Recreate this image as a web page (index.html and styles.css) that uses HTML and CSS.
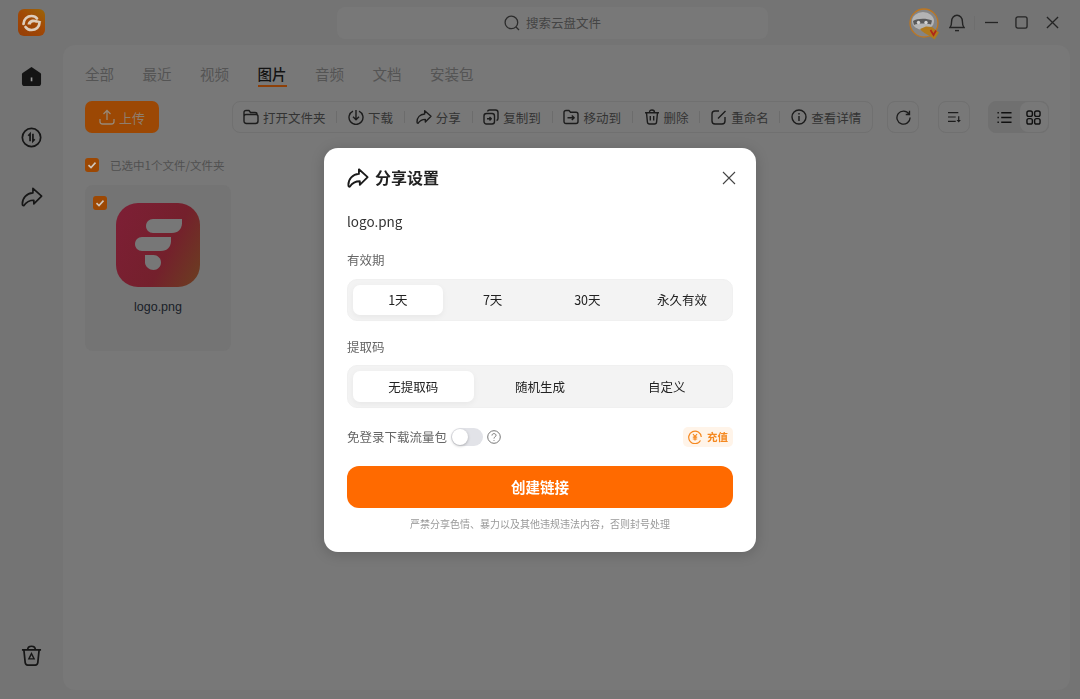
FILE: index.html
```html
<!DOCTYPE html>
<html lang="zh-CN">
<head>
    <meta charset="UTF-8">
    <meta name="viewport" content="width=device-width, initial-scale=1.0">
    <title>分享设置</title>
    <link rel="stylesheet" href="styles.css">
</head>
<body>
    <svg class="icon-defs" width="0" height="0">
        <symbol id="i-share" viewBox="0 0 24 24"><path d="M13 2.500 22.500 11 14 19.500V15.500C10 15.500 6 17 3 21.500 2 21.500 1.500 21 1.500 19.500 1.500 13 6 8 13 7.500Z"/></symbol>
    </svg>

    <div class="app">
        <header class="titlebar">
            <svg class="app-logo" viewBox="0 0 27 27">
                <defs>
                    <linearGradient id="appGrad" x1="1" y1="0" x2="0.3" y2="1">
                        <stop offset="0" stop-color="#9a6608"/>
                        <stop offset="0.5" stop-color="#a24a06"/>
                        <stop offset="1" stop-color="#984006"/>
                    </linearGradient>
                </defs>
                <rect width="27" height="27" rx="6" fill="url(#appGrad)"/>
                <path d="M5.500 15C5.500 10 9.500 7 13.500 7 16 7 18 8 19 9.500M21.500 13.500C21.500 18 18 21 13.500 21 10.500 21 8.500 19.500 7.500 18" fill="none" stroke="#ddcdbc" stroke-width="2.700" stroke-linecap="round"/>
                <path d="M9.500 15.500C10 12 12.500 10.500 15.500 10.500 18 10.500 20.500 11.500 23.500 12.500 21 14 19 14 17 13.500 15 13 13 14 13 15.500Z" fill="#ddcdbc"/>
            </svg>
            <div class="search">
                <svg class="search-icon" viewBox="0 0 16 16"><circle cx="7.400" cy="7.400" r="6.300"/><path d="m12 12 3 3"/></svg>
                <span>搜索云盘文件</span>
            </div>
            <div class="window-tools">
                <svg class="avatar" viewBox="0 0 32 32">
                    <circle cx="15" cy="15" r="14" fill="#858585" stroke="#bd7620" stroke-width="1.300"/>
                    <ellipse cx="14" cy="13" rx="11" ry="9" fill="#b4b4b4"/>
                    <path d="M4 13C8 10.500 17 10 23 12.500L22 16.500C17 15 9 15 5 17Z" fill="#5a5a5a"/>
                    <circle cx="9.500" cy="14.500" r="1.700" fill="#d2d2d2"/>
                    <circle cx="17" cy="14.500" r="1.700" fill="#d2d2d2"/>
                    <path d="M11 21 17 18.500 23 19 30 24.500 25.500 31.500 20 27.500C17 26 13 24 11 21Z" fill="#b07a1e"/>
                    <path d="m21.500 22 3 5 2.500-4.500" fill="none" stroke="#b0261a" stroke-width="1.700"/>
                </svg>
                <svg class="tool-icon bell" viewBox="0 0 16 18"><path d="M1 13.500C2.400 12 2.600 11 2.600 7.500 2.600 3.800 5 1.200 8 1.200S13.400 3.800 13.400 7.500C13.400 11 13.600 12 15 13.500Z"/><path d="M6 16.600H10"/></svg>
                <span class="tool-sep"></span>
                <svg class="tool-icon win-min" viewBox="0 0 14 14"><path d="M0 7H14"/></svg>
                <svg class="tool-icon win-max" viewBox="0 0 14 14"><rect x="1" y="1" width="12" height="12" rx="2"/></svg>
                <svg class="tool-icon win-close" viewBox="0 0 14 14"><path d="m1 1 12 12M13 1 1 13"/></svg>
            </div>
        </header>

        <div class="workspace">
            <nav class="sidebar">
                <svg class="side-icon home" viewBox="0 0 22 22"><path d="M11 1 20.300 7.400C20.800 7.800 21 8.200 21 8.800V18C21 20 20 21 18 21H4C2 21 1 20 1 18V8.800C1 8.200 1.200 7.800 1.700 7.400Z" fill="#141414"/><rect x="10.200" y="12" width="1.700" height="4" fill="#999"/></svg>
                <svg class="side-icon swap" viewBox="0 0 22 22"><circle cx="11" cy="11" r="9.600"/><path d="M9.500 14.800V7.200L7.600 9.200M12.500 7.200V14.800L14.400 12.800"/></svg>
                <svg class="side-icon sharing" viewBox="0 0 24 24"><use href="#i-share"/></svg>
                <svg class="side-icon trash" viewBox="0 0 22 22"><path d="M1 5H21M3 5 4.400 18.500C4.600 20 5.400 21 7 21H15C16.600 21 17.400 20 17.600 18.500L19 5M7 5C7 2.500 8.500 1.300 11 1.300S15 2.500 15 5"/><path d="M11 9 13.800 14.500H8.200Z" stroke-width="1.400"/></svg>
            </nav>

            <main class="panel">
                <div class="tabs">
                    <span class="tab">全部</span>
                    <span class="tab">最近</span>
                    <span class="tab">视频</span>
                    <span class="tab tab-active">图片</span>
                    <span class="tab">音频</span>
                    <span class="tab">文档</span>
                    <span class="tab">安装包</span>
                </div>

                <div class="actions">
                    <button class="upload">
                        <svg viewBox="0 0 16 16"><path d="M8 11V1.500M4.500 5 8 1.500 11.500 5M1 10V12.500C1 14 2 15 3.500 15H12.500C14 15 15 14 15 12.500V10"/></svg>
                        上传
                    </button>
                    <div class="toolbar">
                        <span class="tb-item"><svg viewBox="0 0 16 16"><path d="M1 12V3.500C1 2.300 1.800 1.500 3 1.500H6L7.500 3.500H12C13.200 3.500 14 4.200 14 5.200M3 5.500H13C14.400 5.500 15 6.300 15 7.500V12C15 13.500 14.200 14.500 12.500 14.500H3.500C1.800 14.500 1 13.500 1 12V7.500C1 6.300 1.800 5.500 3 5.500Z"/></svg>打开文件夹</span>
                        <span class="tb-sep"></span>
                        <span class="tb-item"><svg viewBox="0 0 16 16"><path d="M5 2.100A7 7 0 1 0 11 2.100M8 1V10.500M5 7.800 8 10.800 11 7.800"/></svg>下载</span>
                        <span class="tb-sep"></span>
                        <span class="tb-item"><svg viewBox="0 0 24 24"><use href="#i-share"/></svg>分享</span>
                        <span class="tb-sep"></span>
                        <span class="tb-item"><svg viewBox="0 0 16 16"><rect x="1" y="4.500" width="10.500" height="10.500" rx="2.500"/><path d="M4.500 2.500C4.800 1.500 5.500 1 6.500 1H12.500C14 1 15 2 15 3.500V9.500C15 10.500 14.500 11.200 13.500 11.500M4 9.800H8M6.500 8 8.300 9.800 6.500 11.600"/></svg>复制到</span>
                        <span class="tb-sep"></span>
                        <span class="tb-item"><svg viewBox="0 0 16 16"><path d="M1 12.500V3.500C1 2.300 1.800 1.500 3 1.500H6L7.500 3.200H13C14.200 3.200 15 4 15 5.200V12.500C15 13.700 14.200 14.500 13 14.500H3C1.800 14.500 1 13.700 1 12.500ZM4.500 8.800H11M8.800 6.500 11.200 8.800 8.800 11.100"/></svg>移动到</span>
                        <span class="tb-sep"></span>
                        <span class="tb-item"><svg viewBox="0 0 16 16"><path d="M1 3.800H15M2.500 3.800 3.400 13C3.500 14.200 4.200 15 5.500 15H10.500C11.800 15 12.500 14.200 12.600 13L13.500 3.800M5.500 3.500C5.500 1.800 6.500 1 8 1S10.500 1.800 10.500 3.500M6.300 7V11.500M9.700 7V11.500"/></svg>删除</span>
                        <span class="tb-sep"></span>
                        <span class="tb-item"><svg viewBox="0 0 16 16"><path d="M8 2H4C2 2 1 3 1 5V12C1 14 2 15 4 15H11C13 15 14 14 14 12V8M7 9.500 14.500 2"/></svg>重命名</span>
                        <span class="tb-sep"></span>
                        <span class="tb-item"><svg viewBox="0 0 16 16"><circle cx="8" cy="8" r="7"/><path d="M8 7V12M8 4V5.400"/></svg>查看详情</span>
                    </div>
                    <button class="square refresh"><svg viewBox="0 0 16 16"><path d="M13.800 4.200A7 7 0 1 0 15 8M14.400 0.800V4.800H10.400" /></svg></button>
                    <button class="square sort"><svg viewBox="0 0 16 14"><path d="M1 2H13M1 7H10M1 12H10M13.500 6V11.500"/><path class="solid" d="M11 10.500H16L13.500 13.500Z"/></svg></button>
                    <div class="view-switch">
                        <span class="view-btn view-on"><svg viewBox="0 0 16 14"><path d="M4.500 2H15.500M4.500 7H15.500M4.500 12H15.500M.5 2H2M.5 7H2M.5 12H2"/></svg></span>
                        <span class="view-btn"><svg viewBox="0 0 16 16"><rect x="1" y="1" width="5.800" height="5.800" rx="2"/><rect x="9.200" y="1" width="5.800" height="5.800" rx="2"/><rect x="1" y="9.200" width="5.800" height="5.800" rx="2"/><rect x="9.200" y="9.200" width="5.800" height="5.800" rx="2"/></svg></span>
                    </div>
                </div>

                <div class="selection">
                    <span class="check"><svg viewBox="0 0 14 14"><path d="m3.500 7.200 2.500 2.400 4.500-5"/></svg></span>
                    <span>已选中1个文件/文件夹</span>
                </div>

                <div class="file-card">
                    <span class="check card-check"><svg viewBox="0 0 14 14"><path d="m3.500 7.200 2.500 2.400 4.500-5"/></svg></span>
                    <svg class="file-thumb" viewBox="0 0 84 84">
                        <defs>
                            <linearGradient id="thumbGrad" x1="0" y1="0.3" x2="1" y2="0.8">
                                <stop offset="0" stop-color="#7c1f34"/>
                                <stop offset="0.6" stop-color="#74202c"/>
                                <stop offset="1" stop-color="#6c3a22"/>
                            </linearGradient>
                        </defs>
                        <rect width="84" height="84" rx="22" fill="url(#thumbGrad)"/>
                        <path d="M37 16H66V20C66 26 62 30 56 30H37C33 30 30 27 30 23S33 16 37 16Z" fill="#777"/>
                        <path d="M26 34H55V38C55 44 51 48 45 48H26C22 48 19 45 19 41S22 34 26 34Z" fill="#777"/>
                        <path d="M29 52H37.500C41.500 52 45 55.400 45 59.500S41.500 67 37.500 67 29 63.500 29 59.500Z" fill="#777"/>
                    </svg>
                    <span class="file-name">logo.png</span>
                </div>
            </main>
        </div>
    </div>

    <div class="overlay">
        <section class="modal">
            <div class="modal-head">
                <svg class="modal-share" viewBox="0 0 24 24"><use href="#i-share"/></svg>
                <h2>分享设置</h2>
                <svg class="modal-close" viewBox="0 0 14 14"><path d="m1 1 12 12M13 1 1 13"/></svg>
            </div>
            <div class="modal-file">logo.png</div>

            <div class="field-label label-expire">有效期</div>
            <div class="segments seg-four">
                <span class="seg seg-on">1天</span>
                <span class="seg">7天</span>
                <span class="seg">30天</span>
                <span class="seg">永久有效</span>
            </div>

            <div class="field-label label-code">提取码</div>
            <div class="segments seg-three">
                <span class="seg seg-on">无提取码</span>
                <span class="seg">随机生成</span>
                <span class="seg">自定义</span>
            </div>

            <div class="traffic">
                <span>免登录下载流量包</span>
                <span class="switch"><span class="knob"></span></span>
                <svg class="help" viewBox="0 0 14 14"><circle cx="7" cy="7" r="6.300"/><path d="M5 5.500C5 4.300 5.900 3.600 7 3.600S9 4.300 9 5.400C9 6.800 7 6.800 7 8.500M7 10V10.800"/></svg>
                <span class="recharge">
                    <svg viewBox="0 0 14 14"><path d="M12.500 10.500A6.300 6.300 0 1 1 13.300 7"/><path d="M5 4 7 6.500 9 4M4.800 7.200H9.200M4.800 9H9.200M7 6.500V10.500"/></svg>
                    充值
                </span>
            </div>

            <button class="create">创建链接</button>
            <p class="notice">严禁分享色情、暴力以及其他违规违法内容&#xFF0C;否则封号处理</p>
        </section>
    </div>
</body>
</html>
```

FILE: styles.css
```css
* {
    box-sizing: border-box;
}
html, body {
    margin: 0;
    height: 100%;
    overflow: hidden;
}
body {
    font-family: "Noto Sans CJK SC", "Liberation Sans", sans-serif;
    font-size: 12.500px;
    color: #333;
    background-color: #747474;
}
button {
    font-family: inherit;
    border: none;
    padding: 0;
}
svg {
    display: block;
    flex-shrink: 0;
}
.icon-defs {
    position: absolute;
}

/* app behind the dialog, colours are already dimmed */
.app {
    display: flex;
    flex-direction: column;
    height: 699px;
}
.titlebar {
    display: flex;
    align-items: center;
    height: 45px;
    padding: 0 21px 0 18px;
}
.app-logo {
    width: 27px;
    height: 27px;
    margin-bottom: 1px;
}
.search {
    display: flex;
    align-items: center;
    justify-content: center;
    gap: 6px;
    width: 431px;
    height: 32px;
    margin-left: 292px;
    border-radius: 8px;
    background-color: #787878;
    color: #444;
}
.search-icon {
    width: 16px;
    height: 16px;
    fill: none;
    stroke: #2c2c2c;
    stroke-width: 1.300;
}
.window-tools {
    display: flex;
    align-items: center;
    margin-left: auto;
}
.avatar {
    width: 32px;
    height: 32px;
    margin: 3px 8px 0 0;
}
.tool-icon {
    fill: none;
    stroke: #242424;
    stroke-width: 1.400;
}
.bell {
    width: 16px;
    height: 18px;
    margin-right: 9px;
}
.tool-sep {
    width: 1px;
    height: 14px;
    margin-right: 10px;
    background-color: #6e6e6e;
}
.win-min,
.win-max,
.win-close {
    width: 13px;
    height: 13px;
}
.win-max {
    margin: 0 18px 0 17px;
}

.workspace {
    flex: 1;
    display: flex;
    min-height: 0;
}
.sidebar {
    display: flex;
    flex-direction: column;
    align-items: center;
    width: 63px;
    padding: 21px 0 33px;
}
.side-icon {
    width: 21px;
    height: 21px;
    fill: none;
    stroke: #161616;
    stroke-width: 1.800;
}
.home {
    stroke: none;
}
.swap {
    margin-top: 40px;
}
.sharing {
    width: 22px;
    height: 22px;
    margin-top: 38px;
    stroke-linejoin: round;
}
.trash {
    margin-top: auto;
}

.panel {
    flex: 1;
    margin: 0 10px 9px 0;
    padding: 19px 21px 0 22px;
    border-radius: 12px;
    background-color: #787878;
}
.tabs {
    display: flex;
    gap: 28.500px;
    height: 37px;
}
.tab {
    height: 22.500px;
    font-size: 14.500px;
    line-height: 20px;
    color: #545454;
}
.tab-active {
    color: #131313;
    font-weight: 500;
    border-bottom: 2px solid #8e4008;
}

.actions {
    display: flex;
    align-items: center;
    height: 32px;
}
.upload {
    display: flex;
    align-items: center;
    justify-content: center;
    gap: 4px;
    width: 74px;
    height: 32px;
    border-radius: 7px;
    background-color: #9c4804;
    color: #8f7e6e;
    font-size: 13px;
}
.upload svg {
    width: 16px;
    height: 16px;
    fill: none;
    stroke: #978878;
    stroke-width: 1.300;
}
.toolbar {
    display: flex;
    align-items: center;
    gap: 10.800px;
    width: 641px;
    height: 32px;
    margin-left: 73px;
    padding-left: 10px;
    border: 1px solid #707070;
    border-radius: 8px;
    color: #333;
}
.tb-item {
    display: flex;
    align-items: center;
    gap: 4px;
    white-space: nowrap;
}
.tb-item svg {
    width: 16px;
    height: 16px;
    fill: none;
    stroke: #1c1c1c;
    stroke-width: 1.400;
    stroke-linejoin: round;
}
.tb-item use {
    stroke-width: 2.100;
}
.tb-sep {
    width: 1px;
    height: 12px;
    background-color: #6c6c6c;
}
.square {
    display: flex;
    align-items: center;
    justify-content: center;
    width: 32px;
    height: 32px;
    border: 1px solid #707070;
    border-radius: 8px;
    background-color: #787878;
}
.square svg {
    fill: none;
    stroke: #1c1c1c;
    stroke-width: 1.400;
}
.refresh {
    margin-left: 14px;
}
.refresh svg {
    width: 15px;
    height: 15px;
}
.sort {
    margin-left: 19px;
}
.sort svg {
    width: 14px;
    height: 12px;
}
.sort .solid {
    fill: #1c1c1c;
    stroke: none;
}
.view-switch {
    display: flex;
    width: 61px;
    height: 32px;
    margin-left: 18px;
    border: 1px solid #707070;
    border-radius: 8px;
    background-color: #707070;
    overflow: hidden;
}
.view-btn {
    flex: 1;
    display: flex;
    align-items: center;
    justify-content: center;
}
.view-on {
    flex: 1.100;
}
.view-btn:last-child {
    background-color: #787878;
    border-radius: 8px;
}
.view-btn svg {
    width: 15px;
    height: 15px;
    fill: none;
    stroke: #101010;
    stroke-width: 1.500;
}

.selection {
    display: flex;
    align-items: center;
    gap: 11px;
    height: 14px;
    margin-top: 25px;
    font-size: 11.500px;
    color: #505050;
}
.check {
    display: block;
    width: 14px;
    height: 14px;
    border-radius: 3px;
    background-color: #9c4804;
}
.check svg {
    fill: none;
    stroke: #cfc6bc;
    stroke-width: 1.600;
}
.file-card {
    position: relative;
    display: flex;
    flex-direction: column;
    align-items: center;
    width: 146px;
    height: 166px;
    margin-top: 13px;
    padding-top: 18px;
    border-radius: 8px;
    background-color: #747474;
}
.card-check {
    position: absolute;
    top: 11px;
    left: 8px;
}
.file-thumb {
    width: 84px;
    height: 84px;
}
.file-name {
    margin-top: 12px;
    font-family: "Liberation Sans", sans-serif;
    font-size: 12.500px;
    line-height: 16px;
    color: #182028;
}

/* dialog */
.overlay {
    position: fixed;
    inset: 0;
    display: flex;
    align-items: center;
    justify-content: center;
}
.modal {
    width: 432px;
    height: 404px;
    padding: 20px 23px 0;
    border-radius: 14px;
    background-color: #fff;
    box-shadow: 0 2px 14px rgba(0, 0, 0, 0.18);
}
.modal-head {
    display: flex;
    align-items: center;
    height: 20px;
}
.modal-share {
    width: 22px;
    height: 22px;
    fill: none;
    stroke: #1a1a1a;
    stroke-width: 2;
    stroke-linejoin: round;
}
.modal-head h2 {
    margin: 0 0 2px 6px;
    font-size: 16px;
    line-height: 20px;
    font-weight: 700;
    color: #222;
}
.modal-close {
    width: 14px;
    height: 14px;
    margin: 0 -3px 0 auto;
    fill: none;
    stroke: #444;
    stroke-width: 1.100;
}
.modal-file {
    margin-top: 23px;
    font-size: 13.500px;
    line-height: 20px;
    color: #333;
}
.field-label {
    font-size: 12.500px;
    line-height: 20px;
    color: #666;
}
.label-expire {
    margin-top: 19px;
}
.label-code {
    margin-top: 16px;
}
.segments {
    display: grid;
    border: 1px solid #f0f0f0;
    border-radius: 10px;
    background-color: #f3f3f3;
    color: #222;
}
.seg-four {
    grid-template-columns: repeat(4, 1fr);
    column-gap: 5px;
    height: 42px;
    margin-top: 9px;
    padding: 5px;
}
.seg-three {
    grid-template-columns: repeat(3, 1fr);
    column-gap: 6px;
    height: 43px;
    margin-top: 8px;
    padding: 5px;
}
.seg {
    display: flex;
    align-items: center;
    justify-content: center;
    border-radius: 7px;
    font-size: 12.500px;
}
.seg-on {
    background-color: #fff;
    box-shadow: 0 2px 6px rgba(0, 0, 0, 0.05);
}
.traffic {
    display: flex;
    align-items: center;
    height: 20px;
    margin-top: 19px;
    color: #666;
}
.switch {
    display: block;
    width: 32px;
    height: 18px;
    margin-left: 4px;
    padding: 1px;
    border-radius: 9px;
    background-color: #e2e3e8;
}
.knob {
    display: block;
    width: 16px;
    height: 16px;
    border-radius: 50%;
    background-color: #fff;
    box-shadow: 0 1px 3px rgba(0, 0, 0, 0.25);
}
.help {
    width: 14px;
    height: 14px;
    margin-left: 4px;
    fill: none;
    stroke: #777;
    stroke-width: 1;
}
.recharge {
    display: flex;
    align-items: center;
    gap: 5px;
    height: 20px;
    margin-left: auto;
    padding: 0 5px;
    border-radius: 5px;
    background-color: #fff4e9;
    color: #f5881f;
    font-size: 10.500px;
    font-weight: 700;
}
.recharge svg {
    width: 14px;
    height: 14px;
    fill: none;
    stroke: #f5881f;
    stroke-width: 1.200;
}
.create {
    display: block;
    width: 100%;
    height: 42px;
    margin-top: 19px;
    border-radius: 12px;
    background-color: #ff6a00;
    color: #fff;
    font-size: 14.500px;
    font-weight: 700;
    cursor: pointer;
}
.notice {
    margin: 8px 0 0;
    font-size: 10px;
    line-height: 16px;
    text-align: center;
    color: #999;
}
```
